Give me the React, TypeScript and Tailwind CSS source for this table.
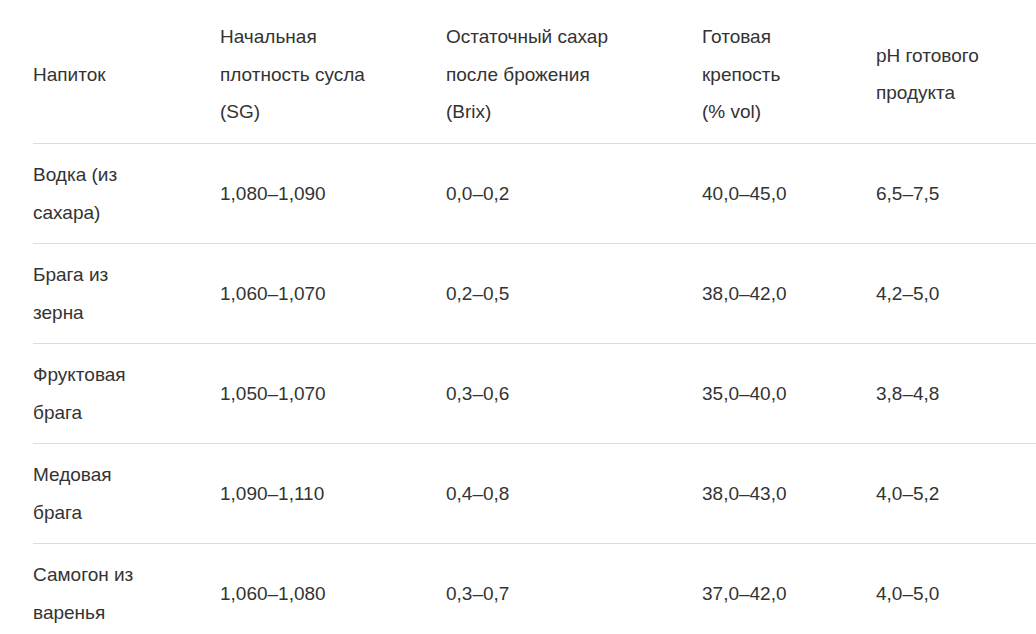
const headers = [
  "Напиток",
  "Начальная плотность сусла (SG)",
  "Остаточный сахар после брожения (Brix)",
  "Готовая крепость (% vol)",
  "pH готового продукта",
];

const rows = [
  ["Водка (из сахара)", "1,080–1,090", "0,0–0,2", "40,0–45,0", "6,5–7,5"],
  ["Брага из зерна", "1,060–1,070", "0,2–0,5", "38,0–42,0", "4,2–5,0"],
  ["Фруктовая брага", "1,050–1,070", "0,3–0,6", "35,0–40,0", "3,8–4,8"],
  ["Медовая брага", "1,090–1,110", "0,4–0,8", "38,0–43,0", "4,0–5,2"],
  ["Самогон из варенья", "1,060–1,080", "0,3–0,7", "37,0–42,0", "4,0–5,0"],
];

// content widths keep the same line breaks as the source table
const colWidths = ["w-[187px]", "w-[226px]", "w-[256px]", "w-[174px]", "w-[170px]"];
const innerWidths = ["max-w-[125px]", "max-w-[175px]", "max-w-[175px]", "max-w-[92px]", "max-w-[132px]"];

export default function App() {
  return (
    <div className="h-[634px] w-[1036px] overflow-hidden bg-white pl-[33px] pt-[5.5px] font-['Liberation_Sans',Arial,sans-serif] text-[19px] leading-[37.5px] text-[#333]">
      <table className="w-[1013px] table-fixed border-collapse text-left">
        <colgroup>
          {colWidths.map((w, i) => (
            <col key={i} className={w} />
          ))}
        </colgroup>
        <thead>
          <tr className="border-b border-[#dcdcdc]">
            {headers.map((h, i) => (
              <th key={i} className="py-[12.5px] align-middle font-normal">
                <div className={innerWidths[i]}>{h}</div>
              </th>
            ))}
          </tr>
        </thead>
        <tbody>
          {rows.map((row, r) => (
            <tr key={r} className="border-b border-[#dcdcdc]">
              {row.map((cell, i) => (
                <td key={i} className="h-[99px] py-[12px] align-middle">
                  <div className={innerWidths[i]}>{cell}</div>
                </td>
              ))}
            </tr>
          ))}
        </tbody>
      </table>
    </div>
  );
}
